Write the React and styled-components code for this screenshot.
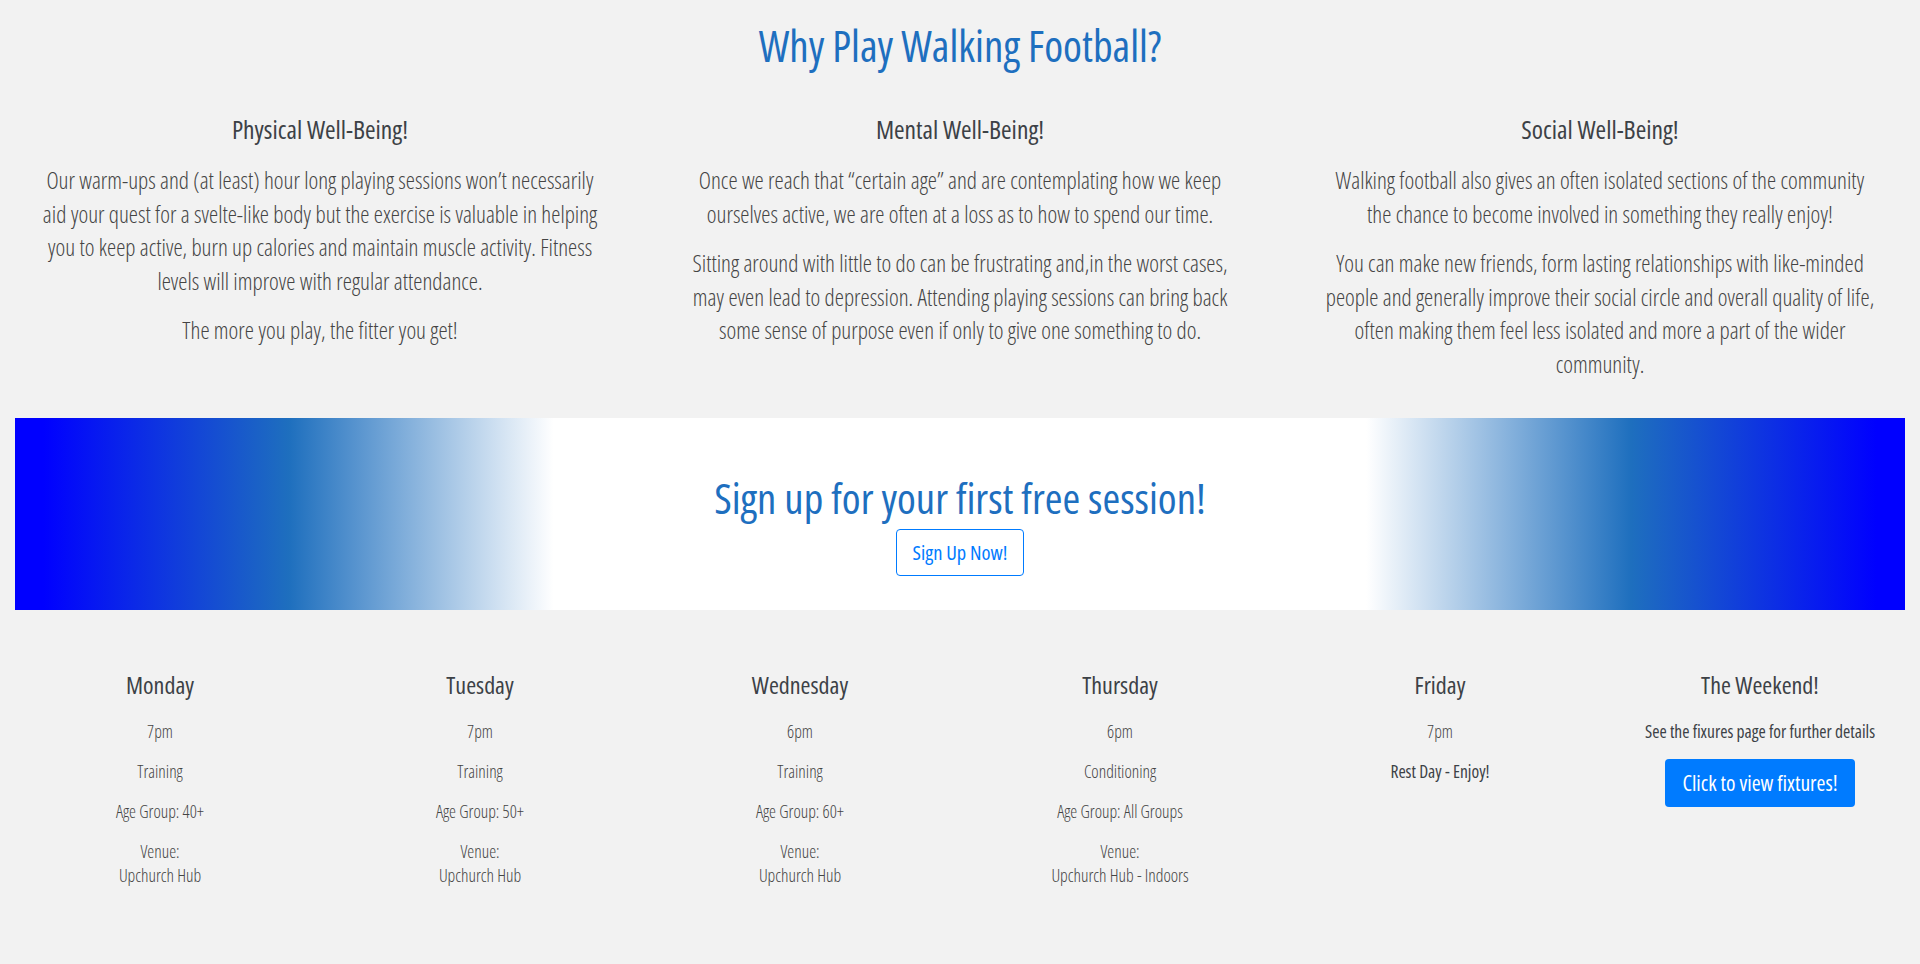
import React from "react";
import styled, { createGlobalStyle } from "styled-components";

const GlobalStyle = createGlobalStyle`
  * { box-sizing: border-box; }
  body {
    margin: 0;
    background: #f2f2f2;
    font-family: "Open Sans", "Roboto", sans-serif;
    font-stretch: 75%;
    color: #444;
  }
`;

const benefits = [
  {
    title: "Physical Well-Being!",
    paras: [
      "Our warm-ups and (at least) hour long playing sessions won’t necessarily aid your quest for a svelte-like body but the exercise is valuable in helping you to keep active, burn up calories and maintain muscle activity. Fitness levels will improve with regular attendance.",
      "The more you play, the fitter you get!",
    ],
  },
  {
    title: "Mental Well-Being!",
    paras: [
      "Once we reach that “certain age” and are contemplating how we keep ourselves active, we are often at a loss as to how to spend our time.",
      "Sitting around with little to do can be frustrating and,in the worst cases, may even lead to depression. Attending playing sessions can bring back some sense of purpose even if only to give one something to do.",
    ],
  },
  {
    title: "Social Well-Being!",
    paras: [
      "Walking football also gives an often isolated sections of the community the chance to become involved in something they really enjoy!",
      "You can make new friends, form lasting relationships with like-minded people and generally improve their social circle and overall quality of life, often making them feel less isolated and more a part of the wider community.",
    ],
  },
];

const days = [
  { day: "Monday", time: "7pm", type: "Training", age: "40+", venue: "Upchurch Hub" },
  { day: "Tuesday", time: "7pm", type: "Training", age: "50+", venue: "Upchurch Hub" },
  { day: "Wednesday", time: "6pm", type: "Training", age: "60+", venue: "Upchurch Hub" },
  { day: "Thursday", time: "6pm", type: "Conditioning", age: "All Groups", venue: "Upchurch Hub - Indoors" },
];

const App = () => {
  return (
    <>
      <GlobalStyle />
      <Why>
        <Title>Why Play Walking Football?</Title>
        <BenefitGrid>
          {benefits.map((b) => (
            <Benefit key={b.title}>
              <SubTitle>{b.title}</SubTitle>
              {b.paras.map((p, i) => (
                <Para key={i}>{p}</Para>
              ))}
            </Benefit>
          ))}
        </BenefitGrid>
      </Why>

      <Banner>
        <BannerTitle>Sign up for your first free session!</BannerTitle>
        <OutlineButton href="#">Sign Up Now!</OutlineButton>
      </Banner>

      <Schedule>
        {days.map((d) => (
          <Day key={d.day}>
            <DayName>{d.day}</DayName>
            <Item>{d.time}</Item>
            <Item>{d.type}</Item>
            <Item>Age Group: {d.age}</Item>
            <Item>
              Venue:
              <br />
              {d.venue}
            </Item>
          </Day>
        ))}
        <Day>
          <DayName>Friday</DayName>
          <Item>7pm</Item>
          <Item $strong>Rest Day - Enjoy!</Item>
        </Day>
        <Day>
          <DayName>The Weekend!</DayName>
          <Item $strong>See the fixures page for further details</Item>
          <SolidButton href="#">Click to view fixtures!</SolidButton>
        </Day>
      </Schedule>
    </>
  );
};

export default App;

const Why = styled.section`
  padding: 22px 0 37px;
  text-align: center;
`;

const Title = styled.h1`
  margin: 0 0 44px;
  font-size: 43px;
  line-height: 48px;
  font-weight: 500;
  color: #1e6fbf;
`;

const BenefitGrid = styled.div`
  display: grid;
  grid-template-columns: repeat(3, 1fr);
`;

const Benefit = styled.div`
  padding: 0 42.5px;
`;

const SubTitle = styled.h3`
  margin: 0 0 20px;
  font-size: 25.5px;
  line-height: 30px;
  font-weight: 500;
  color: #3c4146;
`;

const Para = styled.p`
  margin: 0 0 16px;
  font-size: 23.2px;
  line-height: 33.5px;
  font-weight: 300;

  &:last-child {
    margin-bottom: 0;
  }
`;

const Banner = styled.section`
  margin: 0 15px;
  height: 192px;
  padding-top: 54px;
  display: flex;
  flex-direction: column;
  align-items: center;
  background: linear-gradient(
    to right,
    #0000ff 1.5%,
    #1e6fbe 14.5%,
    #ffffff 28.5%,
    #ffffff 71.5%,
    #1e6fbe 85.5%,
    #0000ff 98.5%
  );
`;

const BannerTitle = styled.h2`
  margin: 0 0 5px;
  font-size: 42.8px;
  line-height: 52px;
  font-weight: 500;
  color: #1e6fbf;
`;

const OutlineButton = styled.a`
  display: inline-block;
  padding: 8px 16px;
  font-size: 20.5px;
  line-height: 29px;
  color: #007bff;
  border: 1px solid #007bff;
  border-radius: 4px;
  text-decoration: none;
  background: transparent;
`;

const Schedule = styled.section`
  display: grid;
  grid-template-columns: repeat(6, 1fr);
  padding: 60px 0 40px;
  text-align: center;
`;

const Day = styled.div`
  display: flex;
  flex-direction: column;
  align-items: center;
`;

const DayName = styled.h3`
  margin: 0 0 19px;
  font-size: 24px;
  line-height: 30px;
  font-weight: 500;
  color: #3c4146;
`;

const Item = styled.p`
  margin: 0 0 16px;
  font-size: 17.5px;
  line-height: 24px;
  font-weight: ${(p) => (p.$strong ? 500 : 300)};
  color: ${(p) => (p.$strong ? "#3c4146" : "#444")};
`;

const SolidButton = styled.a`
  display: inline-block;
  padding: 9px 17px;
  font-size: 21.5px;
  line-height: 30px;
  font-weight: 500;
  color: #fff;
  background: #007bff;
  border-radius: 4px;
  text-decoration: none;
`;
